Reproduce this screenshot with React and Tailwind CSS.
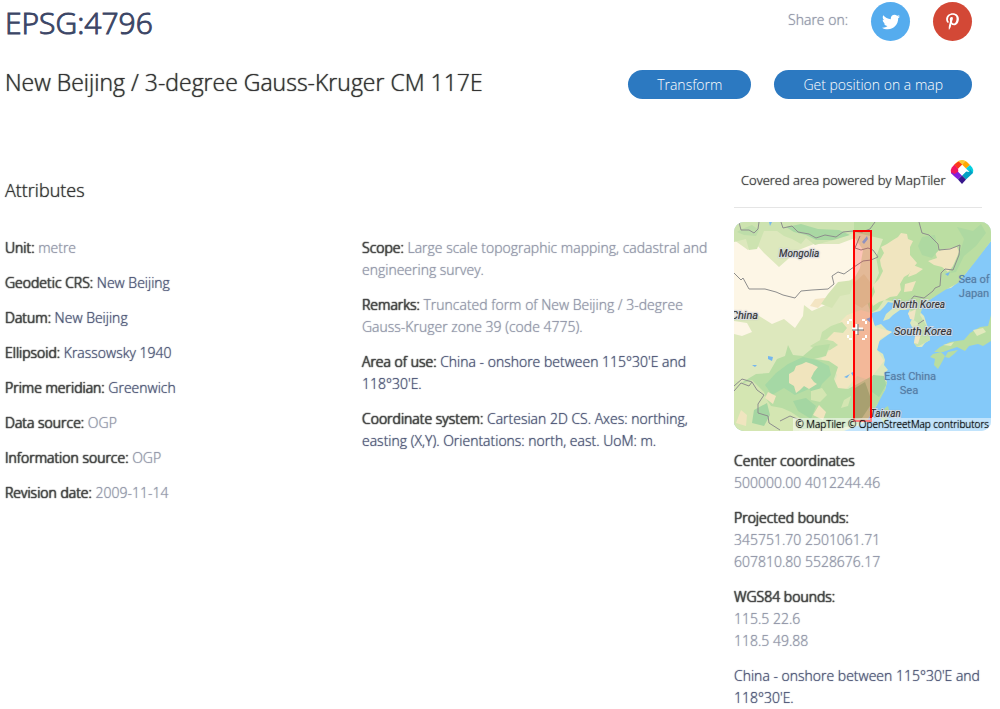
import { FaTwitter, FaPinterestP } from "react-icons/fa";

const attributes = [
  { label: "Unit", value: "metre" },
  { label: "Geodetic CRS", value: "New Beijing", href: "#geodetic-crs" },
  { label: "Datum", value: "New Beijing", href: "#datum" },
  { label: "Ellipsoid", value: "Krassowsky 1940", href: "#ellipsoid" },
  { label: "Prime meridian", value: "Greenwich", href: "#prime-meridian" },
  { label: "Data source", value: "OGP" },
  { label: "Information source", value: "OGP" },
  { label: "Revision date", value: "2009-11-14" },
];

const details = [
  {
    label: "Scope",
    value: "Large scale topographic mapping, cadastral and engineering survey.",
  },
  {
    label: "Remarks",
    value:
      "Truncated form of New Beijing / 3-degree Gauss-Kruger zone 39 (code 4775).",
  },
  {
    label: "Area of use",
    value: "China - onshore between 115°30'E and 118°30'E.",
    href: "#area",
  },
  {
    label: "Coordinate system",
    value:
      "Cartesian 2D CS. Axes: northing, easting (X,Y). Orientations: north, east. UoM: m.",
    href: "#coordinate-system",
  },
];

const bounds = [
  { label: "Center coordinates", lines: ["500000.00 4012244.46"] },
  {
    label: "Projected bounds:",
    lines: ["345751.70 2501061.71", "607810.80 5528676.17"],
  },
  { label: "WGS84 bounds:", lines: ["115.5 22.6", "118.5 49.88"] },
];

function AttributeList({ items }) {
  return (
    <div className="flex flex-col gap-[13px]">
      {items.map(({ label, value, href }) => (
        <p key={label}>
          <span className="text-[#444] [text-shadow:0_0_1px,0_0_1px,0_0_1px]">
            {label}:
          </span>{" "}
          {href ? (
            <a href={href} className="text-[#4b5475]">
              {value}
            </a>
          ) : (
            value
          )}
        </p>
      ))}
    </div>
  );
}

function MapTilerLogo() {
  return (
    <svg viewBox="0 0 24 26" className="h-[26px] w-6" aria-hidden="true">
      <path d="M12 1Q9 1 7 3L4.500 5.500L8 9L12 5.500L15.500 2Q14 1 12 1Z" fill="#fbc935" />
      <path d="M15.500 2L12 5.500L16 9.500L20 6L17 3Z" fill="#ffa801" />
      <path d="M4.500 5.500L8 9.500L12 5.500L8.500 2.500Z" fill="#fb3a1b" />
      <path d="M4.500 5.500L1.800 8.500Q0 11 1 14L4.500 17L8.500 13L8 9.500Z" fill="#f1175d" />
      <path d="M4.500 5.500L8 9.500L12 5.500L8.500 3Z" fill="#fb3a1b" />
      <path d="M20 6L16 9.500L19.500 13L23 14Q24 11 22.200 8.500Z" fill="#05d0df" />
      <path d="M19.500 13L16 12.500L12 16.500L16 20.500L23 14L20 10Z" fill="#03a1c4" />
      <path d="M1 14L4.500 17.500L8 20.500L12 16.500L8 12.500L4.500 11Z" fill="#8020dc" />
      <path d="M1 13L4.500 9L8.500 12.500L4.500 15Z" fill="#f1175d" />
      <path d="M12 16.500L8 20.500L12 25L16 20.500Z" fill="#37178c" />
      <path d="M12 8.500L16 12.500L12 16.500L8 12.500Z" fill="#fff" />
    </svg>
  );
}

function CoverageMap() {
  return (
    <svg
      viewBox="0 0 257 209"
      className="block w-full"
      role="img"
      aria-label="Map of the covered area"
    >
      <rect width="257" height="209" fill="#84c9f9" />
      {/* mainland */}
      <path
        d="M0 0H257V19L249 29L241 39L232 51L223 61L217 66L211 67L204 69L201 74L194 79L189 84L186 90L190 94L192 100L195 110L196 118L191 121L188 125L183 125L180 121L182 113L179 107L176 101L178 97L174 92L176 87L171 88L166 88L159 93L155 97L149 99L152 92L158 87L159 81L154 80L150 85L146 89L138 91L137 98L141 104L147 102L153 108L158 110L151 115L144 120L143 128L149 132L151 138L150 143L154 148L150 151L153 160L151 168L146 175L143 183L138 191L133 198L126 203L110 209H0Z"
        fill="#dde8bd"
      />
      {/* desert */}
      <path
        d="M0 18L14 28L22 22L30 31L45 45L53 38L62 29L80 22L105 22L121 16L129 28L126 46L121 55L105 66L94 82L78 89L70 83L69 94L61 106L50 97L38 102L22 92L0 95Z"
        fill="#fdf6e6"
      />
      <path d="M0 99L13 101L18 110L8 114L0 112Z" fill="#fdf6e6" />
      <path d="M81 77L100 75L96 81L88 82L84 86L76 84Z" fill="#f4e5c3" />
      {/* northern forests */}
      <path
        d="M0 0H124V9L104 17L92 20L81 23L72 16L67 22L58 17L50 14L43 9L30 9L23 27L15 28L12 17L0 20Z"
        fill="#cde3b0"
      />
      <path
        d="M52 5L67 2L84 7L105 8L116 13L99 18L82 18L72 13L60 10Z"
        fill="#a9d8a3"
      />
      <path d="M8 7L18 3L25 8L22 14L10 13L3 10Z" fill="#bddda9" />
      <path
        d="M120 0H257V19L241 40L224 61L211 68L194 79L176 84L168 80L150 78L144 87L137 91L133 80L139 65L145 51L142 35L149 17L136 14L120 10Z"
        fill="#bbdea2"
      />
      <path
        d="M159 18L164 15L167 11L173 12L174 17L179 19L176 25L176 33L183 41L179 46L175 52L170 55L166 62L167 68L163 74L156 75L151 78L145 80L139 84L137 78L141 70L139 63L145 57L149 49L147 44L146 38L150 31L147 25L153 22Z"
        fill="#f0e5bf"
      />
      <path
        d="M201 30L211 27L223 25L225 30L219 44L214 50L208 45L200 43L194 39L203 36Z M179 43L189 47L182 52L174 55Z M171 62L182 59L178 69L170 70Z"
        fill="#f0e5bf"
      />
      <path
        d="M188 15L201 13L204 29L198 36L188 33L184 24ZM223 5L239 9L247 2L252 11L242 24L230 34L222 50L216 51L226 30L230 17Z"
        fill="#aed9a1"
      />
      {/* northern plains */}
      <path
        d="M102 104L113 93L127 88L137 91L141 105L158 110L146 117L143 128L150 139L143 148L135 158L123 154L115 164L105 174L97 171L103 153L98 143L87 137L98 126L93 116Z"
        fill="#f1e6c0"
      />
      <path d="M104 60L120 58L116 72L106 74L98 86L87 82L94 72Z" fill="#d4e4b3" />
      <path
        d="M88 110L97 104L108 100L113 106L109 111L100 110L93 117L86 118ZM76 124L88 117L99 119L104 123L96 128L84 129Z"
        fill="#c6e1ab"
      />
      {/* southern hills */}
      <path
        d="M0 165L12 158L22 152L35 151L43 137L51 134L54 123L59 133L69 134L81 124L96 122L92 134L80 137L95 139L104 145L100 157L104 166L114 167L127 160L140 153L153 160L151 168L143 183L133 198L119 204L104 206L0 209Z"
        fill="#b8dda4"
      />
      <path
        d="M42 151L54 142L69 135L83 138L95 144L97 153L88 162L82 174L75 167L61 173L50 166L38 173L31 163Z"
        fill="#a5d8a5"
      />
      <path
        d="M55 152L60 149L62 144L68 142L72 140L78 142L84 145L80 150L77 156L80 160L83 162L75 167L70 164L66 168L62 171L60 164L55 161Z"
        fill="#f0e4bd"
      />
      <path
        d="M0 158L10 161L18 158L30 170L33 178L37 184L48 186L57 190L69 198L65 209H0ZM77 169L88 166L93 173L86 180L77 178ZM110 178L117 174L114 184L107 186Z"
        fill="#d4e6b2"
      />
      <path
        d="M2 201L7 188L13 193L12 204ZM34 170L42 174L39 182L31 176ZM85 183L92 190L89 198L79 193Z"
        fill="#f0e5bf"
      />
      <path
        d="M20 188L33 181L36 193L30 204L18 201ZM59 179L72 176L82 184L77 197L64 189ZM139 153L150 154L152 163L145 175L138 170Z"
        fill="#a4d6a2"
      />
      <path d="M121 166L131 160L136 174L136 184L128 196L120 198Z" fill="#93c98c" />
      <path d="M121 60L130 52L136 60L136 80L128 86L121 82Z" fill="#d6dcac" />
      {/* korea */}
      <path
        d="M176 87L186 81L188 87L186 93L191 101L195 110L196 118L183 125L180 121L182 113L184 101L178 97Z"
        fill="#c5e1ad"
      />
      <path d="M174 91L182 87L180 98L176 97ZM182 108L187 112L184 122L180 121Z" fill="#f0e5c4" />
      {/* japan and taiwan */}
      <path
        d="M257 93L254 104L246 105L236 111L230 118L216 120L206 125L200 130L209 130L223 125L231 129L235 124L244 122L249 124L257 119ZM199 132L207 130L211 134L208 140L204 147L200 143L201 137L196 135ZM214 130L224 128L220 132L215 136L211 135Z"
        fill="#b9dda1"
      />
      <path d="M239 108L249 106L252 110L243 114ZM209 123L220 120L217 124Z" fill="#e2e9bd" />
      <path d="M151 186L154 184L155 188L153 198L150 202L146 195Z" fill="#b3dca2" />
      {/* lakes and rivers */}
      <g fill="#75b7ee">
        <path d="M35 0H38L36 4ZM34 134L39 135L38 139L34 137ZM18 143H23L21 145ZM211 52L216 50L214 54ZM110 155L116 152L113 156ZM117 151L121 149L119 154ZM128 20L133 14L134 17L130 22ZM132 97L137 95V101Z" />
      </g>
      {/* borders */}
      <g fill="none" stroke="#8d8d8d" strokeWidth="1" strokeLinejoin="round">
        <path d="M5 0L7 8L15 8L20 11L24 7L25 0M47 0L49 6L58 4L64 10L75 12L82 16L91 13L102 15L109 10L119 9L128 10L136 7L141 0" />
        <path d="M0 51L7 58L9 56L15 67L31 67L42 70L49 73L61 76L67 69L78 68L94 67L100 62L98 54L104 50L110 52L117 47L123 43L129 39L137 38L144 35L139 28L134 26L127 28L121 26L126 14" />
        <path d="M185 0L188 11L195 13L204 22L205 28L216 27L226 23L225 33L219 48L211 47L207 51L206 64L201 66L199 69L190 76L180 74L175 80L168 86M184 102L190 98" />
        <path d="M0 169L7 161L15 164L18 160L23 168L30 173L24 182L24 191L34 194L35 201L46 208M0 164L8 157L18 160M46 199L56 194L68 199" />
      </g>
      {/* country labels */}
      <g
        fontFamily="Roboto, sans-serif"
        fontSize="10"
        fontStyle="italic"
        fontWeight="400"
        fill="#333"
        stroke="#fff"
        strokeOpacity="0.6"
        strokeWidth="2"
        paintOrder="stroke"
      >
        <text x="45" y="35">Mongolia</text>
        <text x="-3" y="97" fontSize="11">China</text>
        <text x="159" y="86">North Korea</text>
        <text x="160" y="113" fontSize="11">South Korea</text>
        <text x="136" y="195">Taiwan</text>
      </g>
      <g
        fontFamily="Roboto, sans-serif"
        fontSize="11"
        fontWeight="400"
        fill="#4a7fae"
        textAnchor="middle"
      >
        <text x="240" y="61">Sea of</text>
        <text x="240" y="75">Japan</text>
        <text x="176" y="158">East China</text>
        <text x="175" y="172">Sea</text>
      </g>
      {/* coverage */}
      <rect x="120" y="9" width="17" height="190" fill="#ff0000" fillOpacity="0.2" stroke="#f00" strokeWidth="2" />
      <path d="M123 102V112M118 107H129" stroke="#fff" strokeWidth="3" />
      <path d="M124 102V113M118 108H130" stroke="#666" strokeWidth="1" />
      <path
        d="M118 98H114V102M128 98H132V102M118 117H114V113M128 117H132V113"
        fill="none"
        stroke="#fff"
        strokeWidth="2"
        strokeDasharray="3 2"
      />
    </svg>
  );
}

function Sidebar() {
  return (
    <aside>
      <div className="mr-[9px] flex h-[58px] items-start border-b border-[#e5e5e5] pl-[7px]">
        <p className="mt-[19px] whitespace-nowrap text-[13px] text-[#333]">
          Covered area powered by MapTiler
        </p>
        <a href="#maptiler" aria-label="MapTiler" className="ml-1 mt-[9px]">
          <MapTilerLogo />
        </a>
      </div>

      <div className="relative mt-[14px] overflow-hidden rounded-[10px]">
        <CoverageMap />
        <p className="absolute bottom-0 right-0 whitespace-nowrap bg-white/50 px-[2px] text-[10px] leading-[13px] text-black">
          <a href="#maptiler">© MapTiler</a>{" "}
          <a href="#osm">© OpenStreetMap contributors</a>
        </p>
      </div>

      <div className="mt-[19px] flex flex-col gap-[13px]">
        {bounds.map(({ label, lines }) => (
          <div key={label}>
            <h3 className="text-[#444] [text-shadow:0_0_1px,0_0_1px,0_0_1px]">
              {label}
            </h3>
            {lines.map((line) => (
              <p key={line}>{line}</p>
            ))}
          </div>
        ))}
        <p className="text-[#4b5475]">
          China - onshore between 115°30'E and 118°30'E.
        </p>
      </div>
    </aside>
  );
}

export default function App() {
  return (
    <div className="bg-white pl-[5px] pr-[9px] font-['Open_Sans',sans-serif] text-sm/[22px] font-light text-[#9196a8] [text-shadow:0_0_1px]">
      <header className="pr-[19px]">
        <div className="flex h-[46px] items-start justify-between">
          <h1 className="text-[30px] leading-[46px] text-[#3c4666] [-webkit-text-stroke:1px] [text-shadow:none]">
            EPSG:4796
          </h1>
          <div className="flex items-start pt-[2px]">
            <span className="mr-[23px] mt-[7px]">Share on:</span>
            <a
              href="#twitter"
              aria-label="Share on Twitter"
              className="mr-[23px] flex size-[39px] items-center justify-center rounded-full bg-[#55acee] text-white"
            >
              <FaTwitter size={18} />
            </a>
            <a
              href="#pinterest"
              aria-label="Share on Pinterest"
              className="flex size-[39px] items-center justify-center rounded-full bg-[#d34836] text-white"
            >
              <FaPinterestP size={17} />
            </a>
          </div>
        </div>

        <div className="mt-6 flex h-[29px] items-start justify-between">
          <h2 className="text-[23px]/[24px] text-[#333]">
            New Beijing / 3-degree Gauss-Kruger CM 117E
          </h2>
          <div className="flex gap-[23px] text-white">
            <button className="h-[29px] rounded-full bg-[#2c79c1] px-[29px]">
              Transform
            </button>
            <button className="h-[29px] rounded-full bg-[#2c79c1] px-[29px]">
              Get position on a map
            </button>
          </div>
        </div>
      </header>

      <main className="mt-[51px] grid grid-cols-[357fr_372fr_257fr]">
        <section className="col-span-2 grid grid-cols-[357fr_372fr] content-start">
          <h2 className="col-span-2 mb-9 mt-[29px] text-[18px] text-[#333]">
            Attributes
          </h2>
          <AttributeList items={attributes} />
          <div className="pr-5">
            <AttributeList items={details} />
          </div>
        </section>
        <Sidebar />
      </main>
    </div>
  );
}
